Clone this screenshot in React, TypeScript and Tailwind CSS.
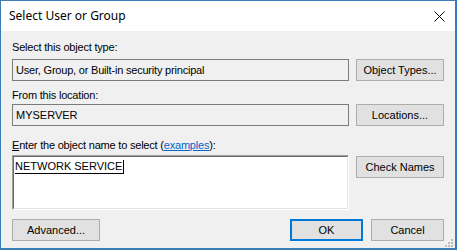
export default function App() {
  const btn =
    "h-[22px] w-[88px] shrink-0 border border-[#adadad] bg-[#e1e1e1] text-[11px] leading-[20px] text-black text-center";

  return (
    <div
      className="relative w-[457px] h-[250px] flex flex-col border-t border-l border-r-2 border-b-2 border-[#3c7cb4] bg-[#f0f0f0] text-black"
      style={{ fontFamily: '"Liberation Sans", Arial, sans-serif' }}
    >
      {/* title bar */}
      <div className="h-[30px] shrink-0 bg-white flex items-center justify-between pl-[8px] pr-[9px]">
        <span
          className="text-[12px] leading-[16px] text-black"
          style={{ fontFamily: '"Noto Sans", "Open Sans", sans-serif' }}
        >
          Select User or Group
        </span>
        <svg width="11" height="11" viewBox="0 0 11 11" className="mr-[1px]">
          <path d="M0.5 0.5L10.5 10.5M10.5 0.5L0.5 10.5" stroke="#000" strokeWidth="1" />
        </svg>
      </div>

      {/* body */}
      <div className="flex-1 flex flex-col px-[11px] pt-[10px] text-[11px]">
        <div className="h-[13px] leading-[13px] tracking-[-0.2px]">Select this object type:</div>
        <div className="flex gap-[7px] mt-[5px]">
          <div className="h-[22px] flex-1 border border-[#7a7a7a] bg-[#f0f0f0] pl-[3px] leading-[20px] tracking-[-0.2px]">
            User, Group, or Built-in security principal
          </div>
          <div className={btn}>Object Types...</div>
        </div>

        <div className="h-[13px] leading-[13px] mt-[8px] tracking-[-0.2px]">From this location:</div>
        <div className="flex gap-[7px] mt-[2px]">
          <div className="h-[22px] flex-1 border border-[#7a7a7a] bg-[#f0f0f0] pl-[3px] leading-[20px]">
            MYSERVER
          </div>
          <div className={btn}>Locations...</div>
        </div>

        <div className="h-[13px] leading-[13px] mt-[13px] tracking-[-0.2px]">
          <span className="underline">E</span>nter the object name to select (
          <span className="text-[#0066cc] underline">examples</span>):
        </div>
        <div className="flex gap-[7px] mt-[3px] items-start">
          <div className="h-[55px] flex-1 border border-t-[#a0a0a0] border-l-[#a0a0a0] border-b-white border-r-white">
            <div className="h-full border border-t-[#696969] border-l-[#696969] border-b-[#e3e3e3] border-r-[#e3e3e3] bg-white pl-[1px] pt-[1px]">
              <span className="inline-block leading-[13px] border-b border-black pr-[1px] border-r">
                NETWORK SERVICE
              </span>
            </div>
          </div>
          <div className={`${btn} mt-[1px]`}>Check Names</div>
        </div>

        <div className="flex mt-[9px] items-center">
          <div className="h-[22px] w-[88px] border border-[#adadad] bg-[#e1e1e1] leading-[20px] text-center">
            Advanced...
          </div>
          <div className="flex-1" />
          <div className="h-[22px] w-[73px] border-2 border-[#0078d7] bg-[#e1e1e1] leading-[18px] text-center mr-[8px]">
            OK
          </div>
          <div className="h-[22px] w-[73px] border border-[#adadad] bg-[#e1e1e1] leading-[20px] text-center">
            Cancel
          </div>
        </div>
      </div>

      {/* resize grip */}
      <svg width="8" height="8" viewBox="0 0 8 8" className="absolute right-[2px] bottom-[1px]">
        <rect x="6" y="0" width="2" height="2" fill="#bdbdbd" />
        <rect x="3" y="3" width="2" height="2" fill="#bdbdbd" />
        <rect x="6" y="3" width="2" height="2" fill="#bdbdbd" />
        <rect x="0" y="6" width="2" height="2" fill="#bdbdbd" />
        <rect x="3" y="6" width="2" height="2" fill="#bdbdbd" />
        <rect x="6" y="6" width="2" height="2" fill="#bdbdbd" />
      </svg>
    </div>
  );
}
